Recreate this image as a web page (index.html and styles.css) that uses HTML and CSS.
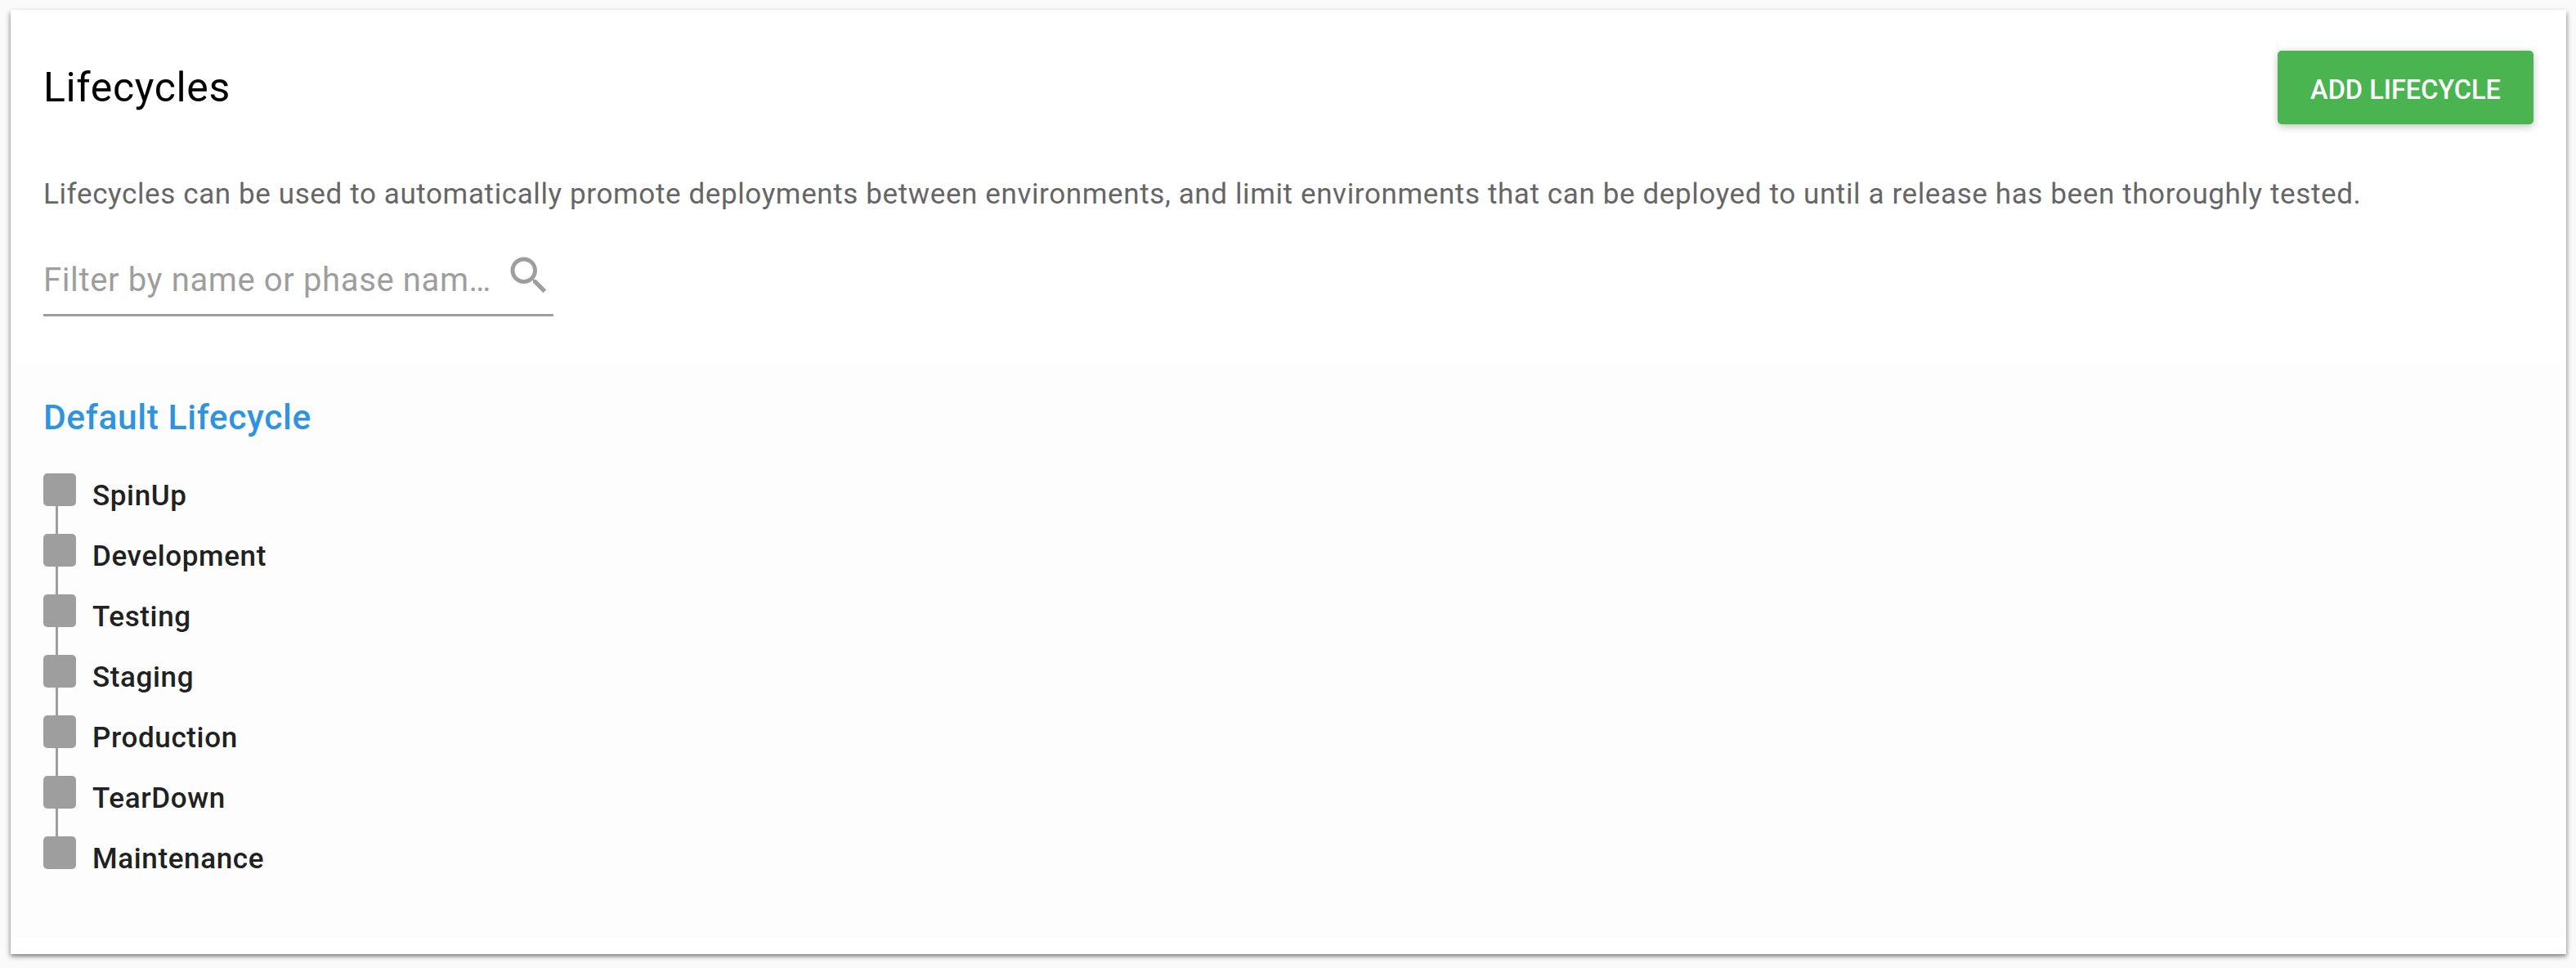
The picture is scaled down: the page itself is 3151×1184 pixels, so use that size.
FILE: index.html
```html
<!DOCTYPE html>
<html lang="en">
<head>
<meta charset="utf-8">
<title>Lifecycles</title>
<link rel="stylesheet" href="styles.css">
</head>
<body>
<main class="card">
  <header class="card-header">
    <h1 class="title">Lifecycles</h1>
    <button class="add-button" type="button">ADD LIFECYCLE</button>
  </header>
  <p class="description">Lifecycles can be used to automatically promote deployments between environments, and limit environments that can be deployed to until a release has been thoroughly tested.</p>
  <div class="filter">
    <span class="filter-placeholder">Filter by name or phase nam…</span>
    <svg class="filter-icon" viewBox="0 0 24 24" aria-hidden="true"><path d="M15.5 14h-.79l-.28-.27C15.41 12.59 16 11.11 16 9.5 16 5.91 13.09 3 9.5 3S3 5.91 3 9.5 5.91 16 9.5 16c1.61 0 3.09-.59 4.23-1.57l.27.28v.79l5 4.99L20.49 19l-4.99-5zm-6 0C7.01 14 5 11.99 5 9.5S7.01 5 9.5 5 14 7.01 14 9.5 11.99 14 9.5 14z"/></svg>
  </div>
  <section class="lifecycle">
    <h2 class="lifecycle-name">Default Lifecycle</h2>
    <ol class="phases">
      <li class="phase"><span class="marker"></span>SpinUp</li>
      <li class="phase"><span class="marker"></span>Development</li>
      <li class="phase"><span class="marker"></span>Testing</li>
      <li class="phase"><span class="marker"></span>Staging</li>
      <li class="phase"><span class="marker"></span>Production</li>
      <li class="phase"><span class="marker"></span>TearDown</li>
      <li class="phase"><span class="marker"></span>Maintenance</li>
    </ol>
  </section>
</main>
</body>
</html>
```
FILE: styles.css
```css
* { box-sizing: border-box; }

body {
  margin: 0;
  padding: 12px 12px 17px 13px;
  background: #fafafa;
  font-family: Roboto, "Liberation Sans", sans-serif;
  letter-spacing: 0.625px;
}

.card {
  height: 1155px;
  padding-top: 50px;
  background: #fff;
  box-shadow: 0 2.5px 7.5px rgba(0, 0, 0, 0.24), 0 2.5px 5px rgba(0, 0, 0, 0.36);
}

.card-header {
  display: flex;
  justify-content: space-between;
  align-items: center;
  height: 90px;
  padding: 0 40px;
}

.title {
  margin: 0;
  font-size: 50px;
  font-weight: 400;
  line-height: 60px;
  color: #000;
}

.add-button {
  width: 313px;
  height: 90px;
  padding: 5px 0 0;
  border: 0;
  border-radius: 5px;
  background: #4ab451;
  color: #fff;
  font: 500 32.5px/50px Roboto, "Liberation Sans", sans-serif;
  letter-spacing: 0;
  box-shadow: 0 2.5px 10px rgba(0, 0, 0, 0.24);
}

.description {
  margin: 61px 40px 0;
  font-size: 35px;
  line-height: 50px;
  letter-spacing: 0.613px;
  color: #666;
}

.filter {
  display: flex;
  width: 624px;
  height: 124px;
  margin: 0 40px;
  border-bottom: 3px solid #9e9e9e;
  color: #9e9e9e;
}

.filter-placeholder {
  width: 564px;
  margin-top: 55px;
  white-space: nowrap;
  font-size: 40px;
  line-height: 50px;
}

.filter-icon {
  flex: none;
  width: 60px;
  height: 60px;
  margin-top: 44px;
  fill: #9e9e9e;
}

.lifecycle {
  height: 703px;
  margin-top: 56px;
  padding: 43px 40px 0;
  background: #fdfdfd;
}

.lifecycle-name {
  margin: 0;
  font-size: 42.5px;
  font-weight: 500;
  line-height: 50px;
  color: #2f93e0;
}

.phases {
  margin: 43px 0 0;
  padding: 0;
  list-style: none;
}

.phase {
  display: flex;
  gap: 20px;
  height: 74px;
  font-size: 35px;
  font-weight: 500;
  line-height: 56px;
  color: #212121;
}

.marker {
  width: 40px;
  height: 40px;
  border-radius: 5px;
  background: #9e9e9e;
}

/* connector down to the next phase */
.phase:not(:last-child) .marker::after {
  content: "";
  display: block;
  width: 3px;
  height: 34px;
  margin: 40px 0 0 15px;
  background: #9e9e9e;
}
```
